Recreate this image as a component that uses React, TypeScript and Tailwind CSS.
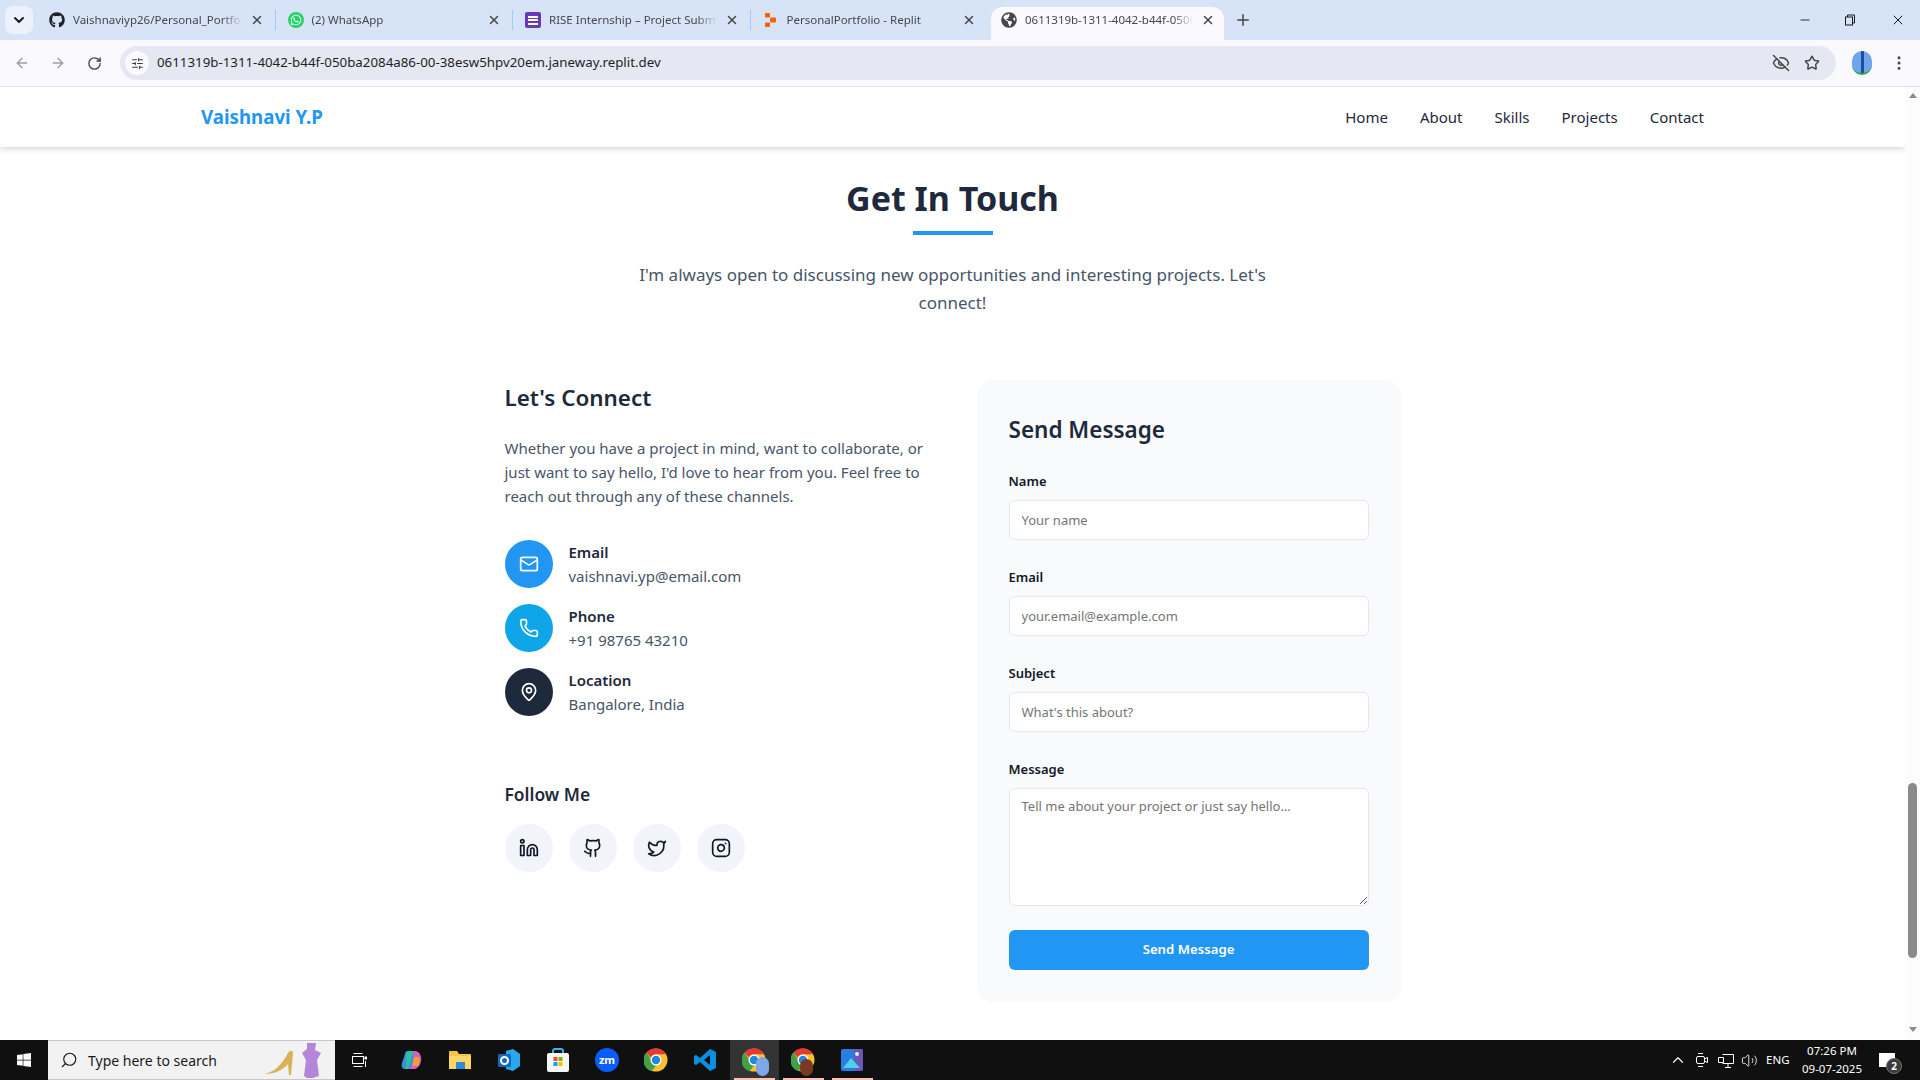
import React from 'react';
import {
  ArrowLeft,
  ArrowRight,
  ChevronDown,
  ChevronUp,
  EllipsisVertical,
  Github,
  Instagram,
  Linkedin,
  Mail,
  MapPin,
  Phone,
  Plus,
  RotateCw,
  Search,
  SlidersHorizontal,
  Star,
  Twitter,
  Volume2,
  X,
  EyeOff,
  Minus,
} from 'lucide-react';
import { FaGithub, FaWhatsapp, FaGlobeAmericas, FaWindows } from 'react-icons/fa';

const ChromeIcon = ({ size = 24 }: { size?: number }) => (
  <svg width={size} height={size} viewBox="0 0 48 48">
    <circle cx="24" cy="24" r="23" fill="#fbc02d" />
    <path d="M24 1a23 23 0 0 1 20 11.5H24a11.5 11.5 0 0 0-10.5 7L5 8.500A23 23 0 0 1 24 1z" fill="#e53935" />
    <path d="M5 8.500l9 15.500a11.500 11.500 0 0 0 10 11.500L15 46.500A23 23 0 0 1 5 8.500z" fill="#43a047" />
    <circle cx="24" cy="24" r="11" fill="#fff" />
    <circle cx="24" cy="24" r="8.500" fill="#1e88e5" />
  </svg>
);

const tabs = [
  { title: 'Vaishnaviyp26/Personal_Portfolio', icon: <FaGithub className="w-4 h-4 text-[#1f2328]" /> },
  {
    title: '(2) WhatsApp',
    icon: (
      <span className="flex items-center justify-center w-4 h-4 rounded-full bg-[#25d366]">
        <FaWhatsapp className="w-3 h-3 text-white" />
      </span>
    ),
  },
  {
    title: 'RISE Internship – Project Submission',
    icon: (
      <span className="flex flex-col items-center justify-center gap-[1.500px] w-4 h-4 rounded-[2px] bg-[#673ab7]">
        <span className="w-[10px] h-[2px] bg-white" />
        <span className="w-[10px] h-[2px] bg-white" />
        <span className="w-[10px] h-[2px] bg-white" />
      </span>
    ),
  },
  {
    title: 'PersonalPortfolio - Replit',
    icon: (
      <svg width="16" height="16" viewBox="0 0 16 16">
        <rect x="2" y="1" width="5" height="4.500" rx="1" fill="#f26207" />
        <rect x="7" y="5.500" width="6" height="5" rx="1" fill="#f26207" />
        <rect x="2" y="10.500" width="5" height="4.500" rx="1" fill="#f26207" />
      </svg>
    ),
  },
  {
    title: '0611319b-1311-4042-b44f-050ba2084a86',
    icon: <FaGlobeAmericas className="w-4 h-4 text-[#474747]" />,
    active: true,
  },
];

const TabStrip = () => (
  <div className="flex items-end h-[40px] bg-[#d7e3f7] pl-[5px]">
    <div className="flex items-center justify-center w-[28px] h-[28px] mb-[6px] mr-[4px] rounded-lg bg-[#ecf1fb]">
      <ChevronDown className="w-4 h-4 text-[#1f1f1f]" strokeWidth={3} />
    </div>
    {tabs.map((t, i) => (
      <div
        key={t.title}
        className={
          t.active
            ? 'flex items-center h-[33px] w-[233px] ml-[4px] pl-[7px] pr-[9px] pb-[7px] rounded-t-xl bg-[#f9f9fe]'
            : 'flex items-center h-[33px] w-[237.500px] pl-[11px] pr-[11px] pb-[7px]'
        }
      >
        {!t.active && i > 0 && <span className="w-px h-[20px] -ml-[11px] mr-[11px] bg-[#a8c7fa]" />}
        <span className={t.active ? 'ml-[3px] shrink-0' : 'ml-[1px] shrink-0'}>{t.icon}</span>
        <span className="ml-[8px] flex-1 min-w-0 overflow-hidden whitespace-nowrap text-[11.500px] text-[#45474a] [mask-image:linear-gradient(to_right,black_88%,transparent)]">
          {t.title}
        </span>
        <X className="ml-[8px] w-[14px] h-[14px] shrink-0 text-[#474747]" strokeWidth={2.5} />
      </div>
    ))}
    <Plus className="w-[18px] h-[18px] ml-[10px] mb-[11px] text-[#474747]" strokeWidth={2} />
    <div className="flex-1" />
    <div className="flex items-center self-start h-[40px] text-[#1a1a1a]">
      <Minus className="w-[14px] h-[14px] mr-[32px]" strokeWidth={1.500} />
      <svg width="12" height="12" viewBox="0 0 12 12" className="mr-[34px]" fill="none" stroke="currentColor">
        <rect x="1.500" y="3" width="7" height="8" />
        <path d="M3.500 3V1h7v8H8.500" />
      </svg>
      <X className="w-[16px] h-[16px] mr-[14px]" strokeWidth={1.500} />
    </div>
  </div>
);

const Toolbar = () => (
  <div className="flex items-center h-[47px] bg-[#f9f9fe] border-b border-[#e2e2ee]">
    <ArrowLeft className="ml-[14px] w-[16px] h-[16px] text-[#9c9ca3]" />
    <ArrowRight className="ml-[20px] w-[16px] h-[16px] text-[#9c9ca3]" />
    <RotateCw className="ml-[21px] w-[15px] h-[15px] text-[#474747]" strokeWidth={2.200} />
    <div className="flex items-center flex-1 h-[34px] ml-[18px] rounded-full bg-[#e5e8f3]">
      <span className="flex items-center justify-center w-[24px] h-[24px] ml-[5px] rounded-full bg-[#f9f9fe]">
        <SlidersHorizontal className="w-[13px] h-[13px] text-[#3c3c3c]" />
      </span>
      <span className="ml-[8px] flex-1 text-[13.300px] text-[#1f1f1f]">
        0611319b-1311-4042-b44f-050ba2084a86-00-38esw5hpv20em.janeway.replit.dev
      </span>
      <EyeOff className="w-[18px] h-[18px] text-[#474747] mr-[14px]" />
      <Star className="w-[16px] h-[16px] text-[#474747] mr-[16px]" strokeWidth={2.200} />
    </div>
    <span className="ml-[16px] w-[20px] h-[24px] rounded-full overflow-hidden bg-[#6fa5ee] border-b-2 border-[#2e9e3f] flex justify-center">
      <span className="w-[3px] h-full bg-[#1b4f9c]" />
    </span>
    <EllipsisVertical className="ml-[18px] mr-[12px] w-[18px] h-[18px] text-[#474747]" />
  </div>
);

const Contact = ({ icon, bg, label, value }: { icon: React.ReactNode; bg: string; label: string; value: string }) => (
  <div className="flex items-center gap-4">
    <div className={`flex items-center justify-center w-12 h-12 rounded-full text-white ${bg}`}>{icon}</div>
    <div>
      <div className="text-[15px] leading-6 font-semibold text-[#1e293b]">{label}</div>
      <div className="text-[15px] leading-6 text-[#475569]">{value}</div>
    </div>
  </div>
);

const Field = ({ label, placeholder }: { label: string; placeholder: string }) => (
  <div>
    <label className="block mb-[9px] text-[13px] leading-5 font-semibold text-[#111827]">{label}</label>
    <input
      placeholder={placeholder}
      className="block w-full h-[40px] px-3 rounded-md border border-[#e2e8f0] bg-white text-[13px] outline-none placeholder:text-[#757575]"
    />
  </div>
);

const Page = () => (
  <div className="flex-1 min-w-0 flex flex-col overflow-hidden bg-white">
    <nav className="relative z-10 flex items-center justify-between h-[60px] shrink-0 pl-[201px] pr-[201px] bg-white shadow-[0_2px_6px_rgba(0,0,0,0.16)]">
      <a className="pt-[1px] text-[18.700px] font-bold text-[#2196f3]">Vaishnavi Y.P</a>
      <div className="flex items-center gap-8 text-[15px] text-[#1e293b]">
        <a>Home</a>
        <a>About</a>
        <a>Skills</a>
        <a>Projects</a>
        <a>Contact</a>
      </div>
    </nav>

    <section className="flex flex-col items-center pt-[31px]">
      <h2 className="text-[34px] leading-10 font-bold text-[#1e293b]">Get In Touch</h2>
      <div className="w-20 h-1 mt-[13px] bg-[#2196f3]" />
      <p className="mt-[26px] w-[672px] text-center text-[17px] leading-7 text-[#475569]">
        I'm always open to discussing new opportunities and interesting projects. Let's connect!
      </p>

      <div className="grid grid-cols-2 gap-12 w-[896px] mt-[63px]">
        <div>
          <h3 className="mt-[2px] text-[22.400px] leading-8 font-semibold text-[#1e293b]">Let's Connect</h3>
          <p className="mt-[22px] text-[15px] leading-6 text-[#475569]">
            Whether you have a project in mind, want to collaborate, or just want to say hello, I'd love to hear from
            you. Feel free to reach out through any of these channels.
          </p>
          <div className="flex flex-col gap-4 mt-[32px]">
            <Contact icon={<Mail className="w-5 h-5" />} bg="bg-[#2196f3]" label="Email" value="vaishnavi.yp@email.com" />
            <Contact icon={<Phone className="w-5 h-5" />} bg="bg-[#0ea5e9]" label="Phone" value="+91 98765 43210" />
            <Contact icon={<MapPin className="w-5 h-5" />} bg="bg-[#1e293b]" label="Location" value="Bangalore, India" />
          </div>
          <h4 className="mt-[64px] text-[17.400px] leading-7 font-semibold text-[#1e293b]">Follow Me</h4>
          <div className="flex gap-4 mt-[16px] text-[#0f172a]">
            {[Linkedin, Github, Twitter, Instagram].map((Icon, i) => (
              <a key={i} className="flex items-center justify-center w-12 h-12 rounded-full bg-[#f1f5f9]">
                <Icon className="w-5 h-5" />
              </a>
            ))}
          </div>
        </div>

        <div className="h-[622px] p-8 rounded-2xl bg-[#f8fafc]">
          <h3 className="mt-[2px] text-[22.500px] leading-8 font-semibold text-[#1e293b]">Send Message</h3>
          <div className="flex flex-col gap-[27px] mt-[25px]">
            <Field label="Name" placeholder="Your name" />
            <Field label="Email" placeholder="your.email@example.com" />
            <Field label="Subject" placeholder="What's this about?" />
            <div>
              <label className="block mb-[9px] text-[13px] leading-5 font-semibold text-[#111827]">Message</label>
              <textarea
                placeholder="Tell me about your project or just say hello..."
                className="block w-full h-[118px] px-3 py-2 rounded-md border border-[#e2e8f0] bg-white text-[13px] outline-none placeholder:text-[#757575]"
              />
            </div>
          </div>
          <button className="w-full h-[40px] mt-[24px] rounded-md bg-[#2196f3] text-[13.200px] font-semibold text-white">
            Send Message
          </button>
        </div>
      </div>
    </section>
  </div>
);

const Scrollbar = () => (
  <div className="flex flex-col items-center w-[15px] shrink-0 bg-[#fcfcfc]">
    <span className="mt-[6px] w-0 h-0 border-x-[4.500px] border-x-transparent border-b-[5px] border-b-[#8a8a8a]" />
    <span className="mt-[685px] w-[9px] h-[175px] rounded-full bg-[#8a8a8a]" />
    <span className="mt-[69px] w-0 h-0 border-x-[4.500px] border-x-transparent border-t-[5px] border-t-[#8a8a8a]" />
  </div>
);

const Slot = ({ children, active, underline }: { children: React.ReactNode; active?: boolean; underline?: boolean }) => (
  <div
    className={
      active
        ? 'relative flex items-center justify-center w-[49px] h-[40px] bg-[#333333]'
        : 'relative flex items-center justify-center w-[49px] h-[40px]'
    }
  >
    {children}
    {underline && <span className="absolute bottom-0 left-[4px] right-[4px] h-[2px] bg-[#f9c4b4]" />}
  </div>
);

const Taskbar = () => (
  <div className="flex items-center h-[40px] shrink-0 bg-[#101010] text-white">
    <div className="flex items-center justify-center w-[48px]">
      <FaWindows className="w-[16px] h-[16px]" />
    </div>
    <div className="flex items-center w-[287px] h-[40px] pl-[12px] bg-[#f2f2f2] border-y border-[#c8c8c8] text-[#1a1a1a]">
      <Search className="w-[18px] h-[18px] -scale-x-100" strokeWidth={1.500} />
      <span className="ml-[10px] flex-1 text-[14px]">Type here to search</span>
      <svg width="64" height="38" viewBox="0 0 64 38" className="mr-[8px]">
        <path d="M1 33c10-2 17-8 24-21 2-3 5-3 5 0l-2 22h-2l-1-11c-5 6-13 10-24 10z" fill="#d8b256" />
        <path d="M44 2l9 0-1 7 6 3-4 7 2 16-6 2h-6l-3-2 2-16-4-7 5-4z" fill="#b486d8" />
      </svg>
    </div>
    <div className="flex items-center justify-center w-[48px] mr-[3.500px]">
      <svg width="16" height="16" viewBox="0 0 16 16" fill="none" stroke="#fff">
        <path d="M2.500 1.500h9M2.500 14.500h9" />
        <rect x="1.500" y="4.500" width="11" height="7" />
        <rect x="14" y="5" width="1.500" height="2" fill="#fff" />
        <path d="M14.500 9v6" />
      </svg>
    </div>
    <Slot>
      <svg width="22" height="22" viewBox="0 0 22 22">
        <path d="M8 2h7c3 0 2 4 1 7l-3 9c-1 2-3 2-5 2H5c-3 0-4-3-3-6l3-9c0-2 1-3 3-3z" fill="#3b8ee0" />
        <path d="M6 5c1-3 3-3 5-3h3L8 20H4c3-1 2-4 2-8z" fill="#2fbf9f" />
        <path d="M14 2c4 0 6 2 7 6 1 5-2 12-7 12H9c3-2 4-6 4-10z" fill="#d65fc0" />
        <path d="M14 8h5c1 2 1 6-1 9h-6z" fill="#f19a3e" />
      </svg>
    </Slot>
    <Slot>
      <svg width="22" height="20" viewBox="0 0 22 20">
        <path d="M0 2a1 1 0 0 1 1-1h7l2 3h11a1 1 0 0 1 1 1v14H0z" fill="#f6c445" />
        <rect x="0" y="6" width="22" height="13" fill="#fbd667" />
        <rect x="7" y="12" width="9" height="7" fill="#2d8bd8" />
      </svg>
    </Slot>
    <Slot>
      <svg width="24" height="24" viewBox="0 0 24 24">
        <path d="M9 3l7-2 7 5v12l-7 5-7-2z" fill="#28a8ea" />
        <rect x="1" y="6" width="13" height="13" rx="1.500" fill="#0f6cbd" />
        <circle cx="7.500" cy="12.500" r="3.500" fill="none" stroke="#fff" strokeWidth="2" />
      </svg>
    </Slot>
    <Slot>
      <svg width="22" height="24" viewBox="0 0 22 24">
        <path d="M6 6V3a2 2 0 0 1 2-2h6a2 2 0 0 1 2 2v3" fill="none" stroke="#35b5e8" strokeWidth="2" />
        <rect x="0" y="5" width="22" height="19" rx="2" fill="#f5f5f5" />
        <rect x="6.500" y="9" width="4" height="4" fill="#f25022" />
        <rect x="11.500" y="9" width="4" height="4" fill="#7fba00" />
        <rect x="6.500" y="14" width="4" height="4" fill="#00a4ef" />
        <rect x="11.500" y="14" width="4" height="4" fill="#ffb900" />
      </svg>
    </Slot>
    <Slot>
      <span className="flex items-center justify-center w-[24px] h-[24px] rounded-full bg-[#0b5cff] text-[11px] font-bold text-white">
        zm
      </span>
    </Slot>
    <Slot>
      <ChromeIcon />
    </Slot>
    <Slot>
      <svg width="24" height="24" viewBox="0 0 24 24">
        <path d="M17 1l6 3v16l-6 3-10-9-4 3-2-1V8l2-1 4 3zM17 7l-6 5 6 5z" fill="#0a8fe0" fillRule="evenodd" />
      </svg>
    </Slot>
    <Slot active underline>
      <ChromeIcon />
      <span className="absolute left-[26px] top-[17px] w-[13px] h-[19px] rounded-full bg-[#7da7e8]" />
    </Slot>
    <Slot underline>
      <ChromeIcon />
      <span className="absolute left-[21px] top-[19px] w-[13px] h-[17px] rounded-full bg-[#7a3a22]" />
    </Slot>
    <Slot underline>
      <svg width="22" height="22" viewBox="0 0 22 22">
        <rect width="22" height="22" rx="2" fill="#2a7de1" />
        <path d="M13 0h7a2 2 0 0 1 2 2v18a2 2 0 0 1-2 2h-6z" fill="#6a57b8" />
        <circle cx="16" cy="5" r="2" fill="#e8f0ff" />
        <path d="M2 19l8-10 9 10z" fill="#4fd0ee" />
      </svg>
    </Slot>
    <div className="flex-1" />
    <ChevronUp className="w-[18px] h-[18px] mr-[8px]" strokeWidth={1.500} />
    <svg width="14" height="16" viewBox="0 0 14 16" fill="none" stroke="#fff" className="mr-[9px]">
      <rect x="1.500" y="4.500" width="8" height="7" rx="1.500" />
      <path d="M9.500 7l3-1.500v5l-3-1.500M3 1.500h5M3 14.500h5" />
    </svg>
    <svg width="16" height="15" viewBox="0 0 16 15" fill="none" stroke="#fff" className="mr-[7px]">
      <path d="M4.500 1.500h11v9h-11M.5 4.500h5v5h-5zM7 14.500h6M10 10.500v4" />
    </svg>
    <Volume2 className="w-[17px] h-[17px] mr-[8px]" strokeWidth={1.200} />
    <span className="w-[24px] text-[11.500px] whitespace-nowrap mr-[6px]">ENG</span>
    <div className="flex flex-col items-center w-[72px] whitespace-nowrap text-[11.500px] leading-[18px] mr-[11px]">
      <span>07:26 PM</span>
      <span>09-07-2025</span>
    </div>
    <div className="relative w-[16px] h-[14px] mr-[25px] bg-white">
      <span className="absolute left-[7px] top-[5px] flex items-center justify-center w-[16px] h-[16px] rounded-full bg-[#3a3a3a] border border-[#777] text-[10px] font-bold">
        2
      </span>
    </div>
  </div>
);

export default function App() {
  return (
    <div className="flex flex-col w-[1920px] h-[1080px] overflow-hidden bg-white font-['Noto_Sans','Open_Sans',sans-serif]">
      <TabStrip />
      <Toolbar />
      <div className="flex flex-1 min-h-0">
        <Page />
        <Scrollbar />
      </div>
      <Taskbar />
    </div>
  );
}
